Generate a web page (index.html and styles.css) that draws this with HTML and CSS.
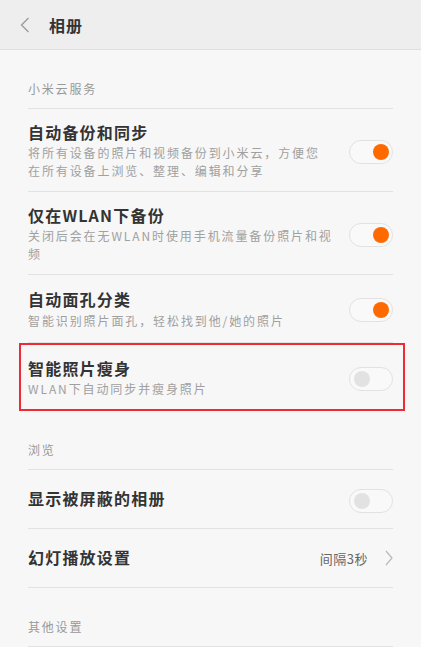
FILE: index.html
```html
<!DOCTYPE html>
<html>
<head>
	<title>相册</title>
	<meta charset="utf-8">
	<link rel="stylesheet" href="styles.css">
</head>
<body>
	<header class="topbar">
		<svg class="back" width="10" height="16" viewBox="0 0 10 16"><path d="M8.5 1 L1.5 8 L8.5 15" fill="none" stroke="#9a9a9a" stroke-width="1.3"/></svg>
		<h1>相册</h1>
	</header>

	<div class="page">
		<div class="section">小米云服务</div>
		<div class="item tall">
			<div class="text">
				<div class="title">自动备份和同步</div>
				<div class="sub">将所有设备的照片和视频备份到小米云，方便您在所有设备上浏览、整理、编辑和分享</div>
			</div>
			<div class="switch on"><span></span></div>
		</div>
		<div class="item tall">
			<div class="text">
				<div class="title">仅在WLAN下备份</div>
				<div class="sub">关闭后会在无WLAN时使用手机流量备份照片和视频</div>
			</div>
			<div class="switch on"><span></span></div>
		</div>
		<div class="item">
			<div class="text">
				<div class="title">自动面孔分类</div>
				<div class="sub">智能识别照片面孔，轻松找到他/她的照片</div>
			</div>
			<div class="switch on"><span></span></div>
		</div>
		<div class="item marked last">
			<div class="text">
				<div class="title">智能照片瘦身</div>
				<div class="sub">WLAN下自动同步并瘦身照片</div>
			</div>
			<div class="switch"><span></span></div>
		</div>

		<div class="section">浏览</div>
		<div class="item single">
			<div class="text">
				<div class="title">显示被屏蔽的相册</div>
			</div>
			<div class="switch"><span></span></div>
		</div>
		<div class="item single">
			<div class="text">
				<div class="title">幻灯播放设置</div>
			</div>
			<div class="value">间隔3秒</div>
			<svg class="arrow" width="8" height="16" viewBox="0 0 8 16"><path d="M1 1 L7 8 L1 15" fill="none" stroke="#b8b8b8" stroke-width="1.2"/></svg>
		</div>

		<div class="section">其他设置</div>
	</div>
</body>
</html>
```

FILE: styles.css
```css
html, body {
	margin: 0;
	padding: 0;
}
body {
	background-color: #f7f7f7;
	font-family: "Noto Sans CJK SC", "Noto Sans", sans-serif;
	color: #333;
	height: 647px;
	overflow: hidden;
}
.topbar {
	display: flex;
	align-items: center;
	height: 50px;
	background-color: #eeeeee;
	border-bottom: 1px solid #dedede;
	box-sizing: border-box;
	padding-left: 20px;
}
.topbar .back {
	margin-right: 19px;
}
.topbar h1 {
	margin: 0;
	font-size: 16px;
	font-weight: bold;
	letter-spacing: 1px;
	color: #333;
}
.page {
	padding: 0 28px;
}
.section {
	height: 59px;
	box-sizing: border-box;
	padding-top: 29px;
	font-size: 12px;
	line-height: 20px;
	letter-spacing: 1.8px;
	color: #999;
	border-bottom: 1px solid #e2e2e2;
}
.item {
	display: flex;
	align-items: center;
	height: 67px;
	border-bottom: 1px solid #e2e2e2;
	position: relative;
}
.item.tall {
	height: 82px;
}
.item.single {
	height: 58px;
}
.item.last {
	height: 68px;
	border-bottom: none;
}
.item .text {
	flex: 1;
	padding-right: 15.4px;
}
.title {
	font-size: 16px;
	font-weight: bold;
	line-height: 23.5px;
	letter-spacing: 1.2px;
	color: #333;
}
.sub {
	font-size: 12px;
	line-height: 17.5px;
	letter-spacing: 1.9px;
	color: #a0a0a0;
}
.switch {
	flex: none;
	width: 44px;
	height: 24px;
	box-sizing: border-box;
	border: 1px solid #e2e2e2;
	border-radius: 12px;
	background-color: #f9f9f9;
	position: relative;
	margin-top: 3px;
}
.switch span {
	position: absolute;
	top: 3px;
	left: 4px;
	width: 16px;
	height: 16px;
	border-radius: 50%;
	background-color: #e2e2e2;
}
.switch.on span {
	left: auto;
	right: 3px;
	background-color: #ff6a00;
}
.value {
	font-size: 13px;
	letter-spacing: 0.5px;
	color: #666;
	margin-right: 17px;
}
.marked::after {
	content: "";
	position: absolute;
	left: -9px;
	right: -12px;
	top: 0;
	bottom: 0;
	border: 2px solid #ee2a35;
}
```
